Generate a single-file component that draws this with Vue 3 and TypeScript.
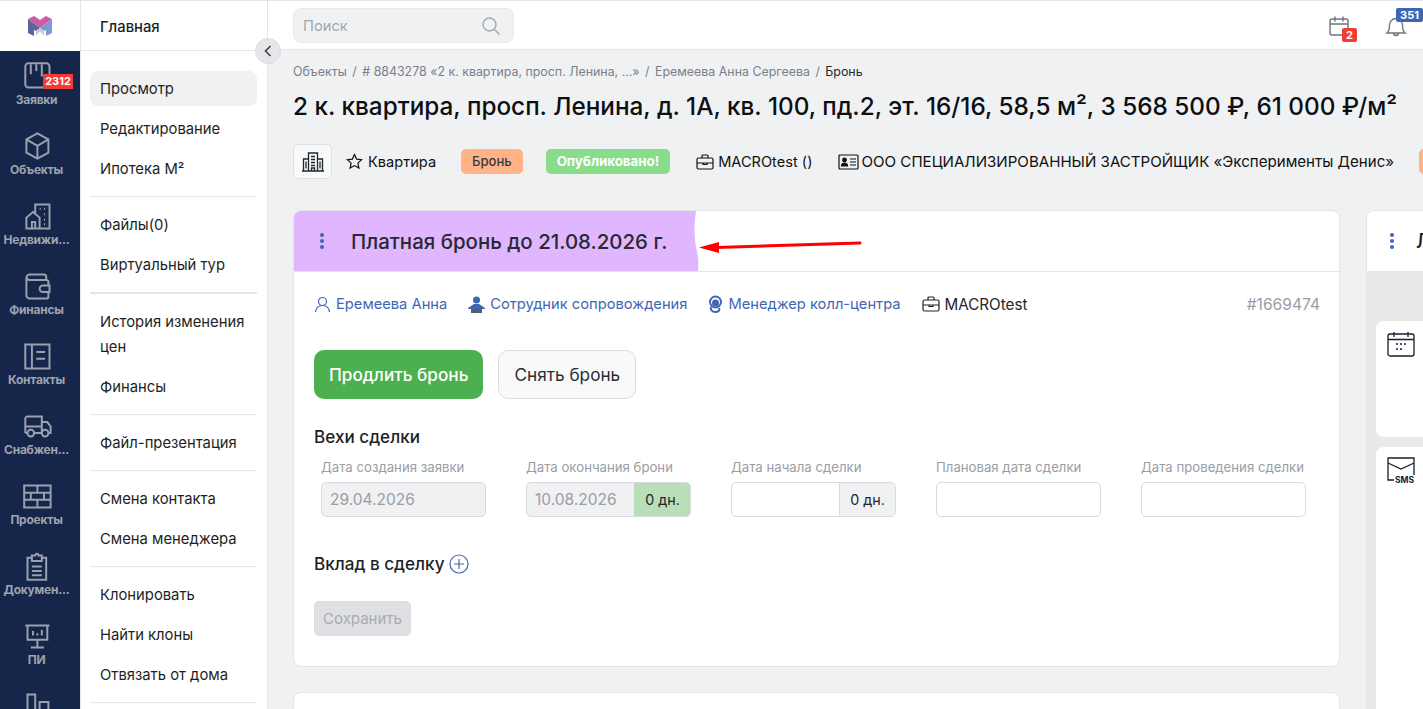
<script setup lang="ts">
interface RailItem {
  label?: string;
  icon: string;
  badge?: string;
}

const railItems: RailItem[] = [
  { label: "Заявки", icon: "M6 2h16a3 3 0 0 1 3 3v16a3 3 0 0 1-3 3H6a3 3 0 0 1-3-3V5a3 3 0 0 1 3-3ZM8 3v9M13 3v6M18 3v11", badge: "2312" },
  { label: "Объекты", icon: "M14 2l10 5.5v12L14 25 4 19.5v-12L14 2ZM4 7.5l10 6 10-6M14 13.5V25" },
  { label: "Недвижи...", icon: "M12 12V3h13v22H4V15l6-5 6 5v10M20 7h1M16 7h1M20 12h1M20 17h1M20 21h1M9 25v-6h3v6" },
  { label: "Финансы", icon: "M22 8V5a2 2 0 0 0-2-2H7a3 3 0 0 0-3 3v16a3 3 0 0 0 3 3h15a2 2 0 0 0 2-2v-4M4 6a3 3 0 0 0 3 2h15a2 2 0 0 1 2 2v3M25 13h-6a3 3 0 0 0 0 6h6v-6Z" },
  { label: "Контакты", icon: "M3 3h22v22H3zM9 3v22M13 10h8M13 16h8" },
  { label: "Снабжен...", icon: "M3 20V7a2 2 0 0 1 2-2h13v15M18 10h5l3 4v6h-2M3 20h2M11 20h7M8 23a3 3 0 1 0 0-6 3 3 0 0 0 0 6ZM21 23a3 3 0 1 0 0-6 3 3 0 0 0 0 6ZM3 14h15" },
  { label: "Проекты", icon: "M2 4h24v20H2zM2 10.500h24M2 17h24M14 4v6.500M8 10.500V17M20 10.500V17M14 17v7" },
  { label: "Докумен...", icon: "M9 6H5v20h17V6h-4M9 4h3a1.500 1.500 0 0 1 3 0h3v5H9zM9 14h9M9 18h9M9 22h9" },
  { label: "ПИ", icon: "M3 4h22M5 4v13h18V4M14 17v6M8 24h12M10 9v4M14 11v2M18 8v5" },
  { icon: "M5 3h7v24H5zM16 10h8v17h-8z" },
];

const menuGroups: string[][] = [
  ["Просмотр", "Редактирование", "Ипотека М²"],
  ["Файлы(0)", "Виртуальный тур"],
  ["История изменения цен", "Финансы"],
  ["Файл-презентация"],
  ["Смена контакта", "Смена менеджера"],
  ["Клонировать", "Найти клоны", "Отвязать от дома"],
];

const milestones = [
  { label: "Дата создания заявки", value: "29.04.2026", disabled: true, days: "", done: false },
  { label: "Дата окончания брони", value: "10.08.2026", disabled: true, days: "0 дн.", done: true },
  { label: "Дата начала сделки", value: "", disabled: false, days: "0 дн.", done: false },
  { label: "Плановая дата сделки", value: "", disabled: false, days: "", done: false },
  { label: "Дата проведения сделки", value: "", disabled: false, days: "", done: false },
];
</script>

<template>
  <div class="page">
    <aside class="rail">
      <div class="logo">
        <svg width="24" height="20" viewBox="0 0 24 20">
          <path d="M0 3 6 0l6 4 6-4 6 3-12 9Z" fill="#d05aa6" />
          <path d="M0 3l12 9-4 3-2-1v6l-6-3Z" fill="#5a6598" />
          <path d="M24 3 12 12l4 3 2-1v6l6-3Z" fill="#7c9ad6" />
          <path d="M8 15l4-3 4 3v5l-4-4.500L8 20Z" fill="#c9ccd6" />
        </svg>
      </div>
      <nav class="rail-list">
        <div v-for="item in railItems" :key="item.icon" class="rail-item">
          <svg width="33" height="31" viewBox="0 0 30 28" fill="none" stroke="#9aa0ad" stroke-width="1.800">
            <path :d="item.icon" />
          </svg>
          <span v-if="item.badge" class="rail-badge">{{ item.badge }}</span>
          <span v-if="item.label" class="rail-label">{{ item.label }}</span>
        </div>
      </nav>
    </aside>

    <aside class="menu">
      <div class="menu-head">Главная</div>
      <button class="collapse" type="button">
        <svg width="8" height="12" viewBox="0 0 8 12" fill="none" stroke="#3a3f4a" stroke-width="1.600">
          <path d="M6.500 1 1.500 6l5 5" />
        </svg>
      </button>
      <div class="menu-body">
        <div v-for="(group, i) in menuGroups" :key="i" class="menu-group" :class="{ thick: i === 1 }">
          <a
            v-for="entry in group"
            :key="entry"
            class="menu-item"
            :class="{ active: entry === 'Просмотр' }"
          >{{ entry }}</a>
        </div>
      </div>
    </aside>

    <div class="content">
      <header class="topbar">
        <div class="search">
          <span>Поиск</span>
          <svg width="20" height="20" viewBox="0 0 20 20" fill="none" stroke="#a4a7ae" stroke-width="1.400">
            <circle cx="8.500" cy="8.500" r="6.500" />
            <path d="m13.500 13.500 5 5" />
          </svg>
        </div>
        <div class="top-icons">
          <div class="top-icon">
            <svg width="22" height="22" viewBox="0 0 22 22" fill="none" stroke="#6f7480" stroke-width="1.400">
              <rect x="2" y="4" width="18" height="16" rx="2" />
              <path d="M2 9h18M7 1.500v5M15 1.500v5" />
            </svg>
            <span class="count red">2</span>
          </div>
          <div class="top-icon bell">
            <svg width="22" height="24" viewBox="0 0 22 24" fill="none" stroke="#6f7480" stroke-width="1.400">
              <path d="M2 18c2-1.500 2.500-3 2.500-8a6.500 6.500 0 0 1 13 0c0 5 .5 6.500 2.500 8H2Z" />
              <path d="M8.500 18a2.500 2.500 0 0 0 5 0" />
            </svg>
            <span class="count blue">351</span>
          </div>
        </div>
      </header>

      <main class="main">
        <div class="crumbs">
          <span>Объекты</span><i>/</i>
          <span># 8843278 «2 к. квартира, просп. Ленина, ...»</span><i>/</i>
          <span>Еремеева Анна Сергеева</span><i>/</i>
          <span class="current">Бронь</span>
        </div>
        <h1 class="title">2 к. квартира, просп. Ленина, д. 1А, кв. 100, пд.2, эт. 16/16, 58,5 м², 3 568 500 ₽, 61 000 ₽/м²</h1>

        <div class="info-row">
          <div class="building">
            <svg width="22" height="20" viewBox="0 0 22 20" fill="none" stroke="#20242c" stroke-width="1.300">
              <path d="M0 19h22M1.500 19V7h5M6.500 19V1h9v18M15.500 7h5v12M9 4.500h4M9 7.500h4M9 10.500h4M9 13.500h4M9.500 19v-3h3v3M4 9.500v7M18 9.500v7" />
            </svg>
          </div>
          <div class="info star">
            <svg width="17" height="17" viewBox="0 0 17 17" fill="none" stroke="#111" stroke-width="1.200">
              <path d="m8.500 1.500 2.100 4.600 5 .6-3.700 3.400 1 5-4.400-2.500-4.400 2.500 1-5L1.400 6.700l5-.6Z" />
            </svg>
            <span>Квартира</span>
          </div>
          <span class="tag orange">Бронь</span>
          <span class="tag green">Опубликовано!</span>
          <div class="info company">
            <svg width="18" height="16" viewBox="0 0 18 16" fill="none" stroke="#111" stroke-width="1.200">
              <rect x="1" y="4" width="16" height="11" rx="1.500" />
              <path d="M6 4V2a1 1 0 0 1 1-1h4a1 1 0 0 1 1 1v2M1 9h16M7 9v1.500h4V9" />
            </svg>
            <span>MACROtest ()</span>
          </div>
          <div class="info developer">
            <svg width="21" height="16" viewBox="0 0 21 16" fill="none" stroke="#111" stroke-width="1.200">
              <rect x="1" y="1" width="19" height="14" rx="1" />
              <circle cx="6.500" cy="6" r="1.800" fill="#111" />
              <path d="M3.500 12c0-4 6-4 6 0Z" fill="#111" />
              <path d="M12 5h6M12 8h6M12 11h6" />
            </svg>
            <span>ООО СПЕЦИАЛИЗИРОВАННЫЙ ЗАСТРОЙЩИК «Эксперименты Денис»</span>
          </div>
          <span class="tag orange tail"></span>
        </div>

        <div class="columns">
          <div class="left-col">
            <section class="card">
              <div class="card-head">
                <div class="status">
                  <span class="dots"><b></b><b></b><b></b></span>
                  <span class="status-text">Платная бронь до 21.08.2026 г.</span>
                </div>
                <svg class="wave" width="6" height="60" viewBox="0 0 6 60" preserveAspectRatio="none">
                  <path d="M0 0h2C0 14 0 24 2 36c2 8 3 14 2 24H0Z" fill="#e0b6ff" />
                </svg>
              </div>

              <div class="card-body">
                <div class="people">
                  <span class="person">
                    <svg width="17" height="17" viewBox="0 0 17 17" fill="none" stroke="#3f66b4" stroke-width="1.200">
                      <circle cx="8.500" cy="5.500" r="4" />
                      <path d="M1.500 16c.5-4 3-6.500 7-6.500s6.500 2.500 7 6.500" />
                    </svg>
                    Еремеева Анна
                  </span>
                  <span class="person">
                    <svg width="17" height="17" viewBox="0 0 17 17" fill="#3f66b4">
                      <circle cx="8.500" cy="4" r="3.500" />
                      <path d="M0 12 6 8h5l6 4v1H0Z" />
                      <rect x="3" y="13" width="11" height="4" fill="#5a5e68" />
                    </svg>
                    Сотрудник сопровождения
                  </span>
                  <span class="person">
                    <svg width="15" height="18" viewBox="0 0 15 18" fill="none" stroke="#3f66b4" stroke-width="2">
                      <circle cx="7.500" cy="7" r="5.500" />
                      <circle cx="7.500" cy="8" r="2.500" fill="#3f66b4" />
                      <path d="M3 12c-1 2.500 1 5 4.500 5 3 0 4.500-2 3.500-4" />
                    </svg>
                    Менеджер колл-центра
                  </span>
                  <span class="person dark">
                    <svg width="18" height="16" viewBox="0 0 18 16" fill="none" stroke="#222" stroke-width="1.200">
                      <rect x="1" y="4" width="16" height="11" rx="1.500" />
                      <path d="M6 4V2a1 1 0 0 1 1-1h4a1 1 0 0 1 1 1v2M1 9h16M7 9v1.500h4V9" />
                    </svg>
                    MACROtest
                  </span>
                  <span class="number">#1669474</span>
                </div>

                <div class="actions">
                  <button class="btn primary" type="button">Продлить бронь</button>
                  <button class="btn plain" type="button">Снять бронь</button>
                </div>

                <h3 class="section">Вехи сделки</h3>
                <div class="dates">
                  <div v-for="m in milestones" :key="m.label" class="date">
                    <label>{{ m.label }}</label>
                    <div class="field" :class="{ disabled: m.disabled }">
                      <span class="value">{{ m.value }}</span>
                      <span v-if="m.days" class="days" :class="{ done: m.done }">{{ m.days }}</span>
                    </div>
                  </div>
                </div>

                <h3 class="section add">
                  Вклад в сделку
                  <svg width="20" height="20" viewBox="0 0 20 20" fill="none" stroke="#3f66b4" stroke-width="1.200">
                    <circle cx="10" cy="10" r="9" />
                    <path d="M10 5v10M5 10h10" />
                  </svg>
                </h3>

                <button class="save" type="button" disabled>Сохранить</button>
              </div>
            </section>
            <section class="card next"></section>
          </div>

          <aside class="side">
            <div class="side-head">
              <span class="dots side-dots"><b></b><b></b><b></b></span>
              <span class="side-title">Л</span>
            </div>
            <div class="side-body">
              <div class="side-card">
                <svg width="28" height="26" viewBox="0 0 28 26" fill="none" stroke="#15202e" stroke-width="1.300">
                  <rect x="1" y="3" width="26" height="22" rx="2" />
                  <path d="M1 8.500h26M7 1v5M21 1v5" />
                  <path d="M9 13h2M13 13h2M17 13h2M9 18h2M13 18h2" stroke-width="1.600" />
                </svg>
              </div>
              <div class="side-card tall">
                <svg width="30" height="27" viewBox="0 0 30 27" fill="none" stroke="#15202e" stroke-width="1.300">
                  <path d="M7 23H1V1h26v17M1 6l13 6 13-6" />
                  <text x="8" y="26" font-size="8.500" font-weight="700" fill="#15202e" stroke="none">SMS</text>
                </svg>
              </div>
            </div>
          </aside>
        </div>
      </main>
    </div>

    <svg class="arrow" width="170" height="24" viewBox="0 0 170 24">
      <path d="M165 8 22 12.500" stroke="#f00" stroke-width="3" stroke-linecap="round" />
      <path d="M4 12.500 24 7v11Z" fill="#f00" />
    </svg>
  </div>
</template>

<style scoped>
.page {
  position: relative;
  display: flex;
  width: 1423px;
  height: 709px;
  overflow: hidden;
  background: #f0f1f3;
  color: #1d1f24;
  font-family: Inter, "Noto Sans", sans-serif;
  font-size: 14px;
  border-top: 1px solid #e4e5e8;
  box-sizing: border-box;
}

.rail {
  flex: 0 0 80px;
  display: flex;
  flex-direction: column;
}

.logo {
  height: 50px;
  flex: none;
  display: flex;
  align-items: center;
  justify-content: center;
  background: #fff;
}

.rail-list {
  flex: 1;
  background: #16264a;
  overflow: hidden;
}

.rail-item {
  position: relative;
  height: 70px;
  display: flex;
  flex-direction: column;
  align-items: center;
  padding-top: 10px;
  box-sizing: border-box;
}

.rail-item svg {
  flex: none;
  margin-left: -4px;
}

.rail-label {
  margin-left: -7px;
  width: 80px;
  text-align: center;
  font-size: 12px;
  font-weight: 700;
  letter-spacing: -0.25px;
  color: #9ea3ae;
  white-space: nowrap;
}

.rail-badge {
  position: absolute;
  top: 23px;
  right: 7px;
  width: 30px;
  height: 15px;
  background: #f23b33;
  color: #fff;
  font-size: 11px;
  font-weight: 700;
  line-height: 15px;
  text-align: center;
}

.menu {
  position: relative;
  flex: 0 0 188px;
  box-sizing: border-box;
  background: #fff;
  border-left: 1px solid #e4e5e8;
  border-right: 1px solid #e4e5e8;
}

.menu-head {
  height: 50px;
  box-sizing: border-box;
  padding: 16px 0 0 19px;
  font-size: 14.800px;
  line-height: 20px;
  font-weight: 500;
  border-bottom: 1px solid #e4e5e8;
}

.collapse {
  position: absolute;
  top: 37px;
  right: -14px;
  z-index: 2;
  width: 26px;
  height: 26px;
  padding: 0;
  display: flex;
  align-items: center;
  justify-content: center;
  border: 1px solid #dcdde1;
  border-radius: 50%;
  background: #e5e6e9;
}

.menu-body {
  padding: 20px 10px 0 9px;
}

.menu-group {
  display: flex;
  flex-direction: column;
  gap: 5px;
  padding-bottom: 10px;
  margin-bottom: 10px;
  border-bottom: 1px solid #e4e5e8;
}

.menu-group.thick {
  border-bottom-width: 2px;
}

.menu-item {
  display: block;
  padding: 6px 10px 4px;
  min-height: 25px;
  font-size: 14.800px;
  line-height: 25px;
  border-radius: 8px;
}

.menu-item.active {
  background: #f0f1f3;
}

.content {
  flex: 1;
  min-width: 0;
  display: flex;
  flex-direction: column;
}

.topbar {
  height: 49px;
  flex: none;
  box-sizing: border-box;
  display: flex;
  align-items: flex-start;
  justify-content: space-between;
  padding: 7px 0 0 25px;
  background: #fff;
  border-bottom: 1px solid #e4e5e8;
}

.search {
  width: 221px;
  height: 35px;
  box-sizing: border-box;
  display: flex;
  align-items: center;
  justify-content: space-between;
  padding: 0 12px 0 9px;
  background: #f0f1f3;
  border: 1px solid #e9eaec;
  border-radius: 8px;
  color: #a4a7ae;
  font-size: 14.700px;
}

.top-icons {
  display: flex;
  gap: 35px;
  padding-top: 7px;
}

.top-icon {
  position: relative;
  width: 22px;
  height: 24px;
}

.top-icon.bell {
  margin-right: 16px;
}

.count {
  position: absolute;
  color: #fff;
  font-size: 11px;
  font-weight: 700;
  line-height: 14px;
  text-align: center;
  border-radius: 2px;
}

.count.red {
  top: 13px;
  left: 14px;
  width: 15px;
  background: #f23b33;
}

.count.blue {
  top: -7px;
  left: 11px;
  width: 27px;
  background: #3f66b4;
}

.main {
  flex: 1;
  min-height: 0;
  padding: 13px 0 0 25px;
}

.crumbs {
  display: flex;
  align-items: center;
  height: 17px;
  font-size: 12.400px;
  color: #7b7f88;
  white-space: nowrap;
}

.crumbs i {
  margin: 0 5.500px;
  font-style: normal;
}

.crumbs .current {
  color: #24272d;
}

.title {
  margin: 8px 0 0;
  font-size: 24.300px;
  line-height: 36px;
  font-weight: 500;
  color: #0d0f13;
  white-space: nowrap;
}

.info-row {
  display: flex;
  align-items: center;
  margin-top: 20px;
  height: 35px;
  white-space: nowrap;
  font-size: 14.600px;
  color: #111;
}

.building {
  flex: none;
  width: 39px;
  height: 35px;
  box-sizing: border-box;
  display: flex;
  align-items: center;
  justify-content: center;
  background: #f8f9f9;
  border: 1px solid #dfe0e3;
  border-radius: 5px;
}

.info {
  flex: none;
  display: flex;
  align-items: center;
}

.star {
  margin-left: 14px;
  gap: 5px;
}

.tag {
  flex: none;
  height: 25px;
  padding: 0 11px;
  box-sizing: border-box;
  line-height: 25px;
  font-size: 13px;
  font-weight: 500;
  border-radius: 5px;
}

.tag.orange {
  margin-left: 25px;
  background: #ffb387;
  color: #3a3a3a;
}

.tag.green {
  margin-left: 23px;
  padding: 0 11px;
  background: #88dc8a;
  color: #fff;
  font-size: 13.300px;
  font-weight: 700;
}

.tag.tail {
  margin-left: 25px;
  width: 40px;
}

.company {
  margin-left: 26px;
  gap: 4px;
}

.developer {
  margin-left: 25px;
  gap: 3px;
  font-size: 15.100px;
}

.columns {
  display: flex;
  align-items: flex-start;
  gap: 26px;
  margin-top: 31px;
}

.left-col {
  flex: 0 0 1047px;
}

.card {
  box-sizing: border-box;
  background: #fff;
  border: 1px solid #e4e5e8;
  border-radius: 8px;
  overflow: hidden;
}

.card.next {
  height: 100px;
  margin-top: 25px;
}

.card-head {
  height: 61px;
  box-sizing: border-box;
  display: flex;
  border-bottom: 1px solid #e4e5e8;
}

.status {
  width: 400px;
  display: flex;
  align-items: center;
  background: #e0b6ff;
}

.dots {
  display: flex;
  flex-direction: column;
  gap: 2px;
}

.dots b {
  width: 4px;
  height: 4px;
  border-radius: 50%;
  background: #3f66b4;
}

.status .dots {
  margin: 0 27px 0 26px;
}

.status-text {
  font-size: 20.450px;
  font-weight: 500;
  color: #272a33;
  white-space: nowrap;
}

.wave {
  display: block;
}

.card-body {
  padding: 22px 19px 30px 20px;
}

.people {
  display: flex;
  align-items: center;
  height: 20px;
  font-size: 14.700px;
  white-space: nowrap;
}

.person {
  display: flex;
  align-items: center;
  gap: 5px;
  margin-right: 21px;
  color: #3f66b4;
}

.person.dark {
  color: #22252b;
  font-size: 15.200px;
}

.number {
  margin-left: auto;
  color: #9a9da5;
  font-size: 15.600px;
}

.actions {
  display: flex;
  gap: 15px;
  margin-top: 36px;
}

.btn {
  height: 49px;
  padding: 0 15px;
  box-sizing: border-box;
  font-family: inherit;
  font-size: 17.200px;
  border-radius: 10px;
}

.btn.primary {
  border: 0;
  background: #4caf50;
  color: #fff;
  font-weight: 500;
}

.btn.plain {
  border: 1px solid #dcdde0;
  background: #f8f9f9;
  color: #2a2d33;
}

.section {
  margin: 28px 0 0;
  font-size: 17.100px;
  line-height: 20px;
  font-weight: 500;
}

.dates {
  display: flex;
  gap: 40px;
  margin: 11px 0 0 7px;
}

.date {
  width: 165px;
  flex: none;
}

.date label {
  display: block;
  font-size: 13.200px;
  line-height: 18px;
  color: #9a9da5;
  white-space: nowrap;
}

.field {
  display: flex;
  height: 35px;
  margin-top: 6px;
  box-sizing: border-box;
  border: 1px solid #d9dade;
  border-radius: 5px;
  overflow: hidden;
  font-size: 15.500px;
  line-height: 33px;
  background: #fff;
}

.field.disabled {
  background: #f0f1f3;
  color: #9a9da5;
}

.value {
  flex: 1;
  padding-left: 8px;
}

.days {
  flex: 0 0 55px;
  text-align: center;
  font-size: 14.300px;
  color: #22252b;
  background: #f0f1f3;
  border-left: 1px solid #d9dade;
}

.days.done {
  background: #b8dfb8;
  border-left-color: #b8dfb8;
}

.section.add {
  display: flex;
  align-items: center;
  gap: 5px;
  margin-top: 37px;
}

.save {
  display: block;
  width: 97px;
  height: 35px;
  margin-top: 27px;
  padding: 0;
  font-family: inherit;
  font-size: 15px;
  color: #a9abb0;
  background: #dfe0e3;
  border: 1px solid #dcdde0;
  border-radius: 5px;
}

.side {
  flex: 0 0 300px;
  height: 620px;
  box-sizing: border-box;
  background: #fff;
  border: 1px solid #e4e5e8;
  border-radius: 8px 0 0 8px;
  overflow: hidden;
}

.side-head {
  height: 60px;
  display: flex;
  align-items: center;
}

.side-dots {
  margin: 0 22px 0 23px;
}

.side-title {
  font-size: 20px;
  font-weight: 500;
}

.side-body {
  height: 560px;
  padding: 50px 0 0 9px;
  background: #e9e9e9;
}

.side-card {
  height: 116px;
  padding: 10px 0 0 11px;
  background: #fff;
  border-radius: 8px 0 0 8px;
  margin-bottom: 10px;
  box-sizing: border-box;
}

.side-card.tall {
  height: 300px;
}

.arrow {
  position: absolute;
  left: 695px;
  top: 234px;
}
</style>

<style>
html,
body {
  margin: 0;
  overflow: hidden;
}
</style>
